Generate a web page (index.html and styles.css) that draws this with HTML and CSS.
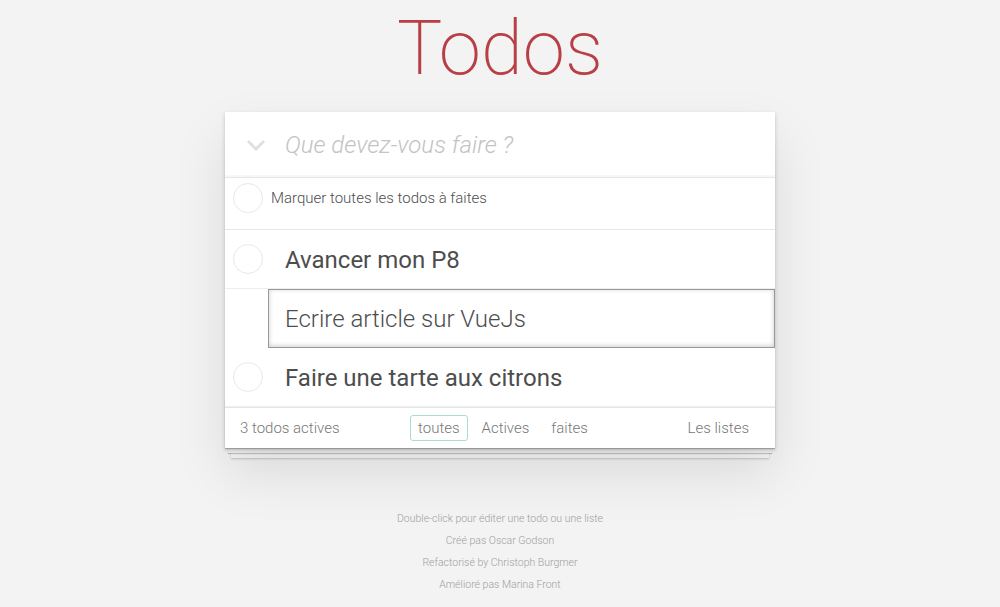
FILE: index.html
```html
<!DOCTYPE html>
<html lang="fr">
<head>
    <meta charset="UTF-8">
    <meta name="viewport" content="width=device-width, initial-scale=1.0">
    <title>Todos</title>
    <link rel="stylesheet" href="styles.css">
</head>

<body>
    <div class="page">
        <h1 class="title">Todos</h1>

        <section class="todoapp">
            <header class="header">
                <span class="toggle-all">
                    <svg width="20" height="12" viewBox="0 0 20 12">
                        <polyline points="2,2 10,10 18,2" fill="none" stroke="#e0e0e0" stroke-width="3"/>
                    </svg>
                </span>
                <input class="new-todo" type="text" placeholder="Que devez-vous faire ?">
            </header>

            <div class="mark-all">
                <span class="circle"></span>
                <span class="mark-all-label">Marquer toutes les todos à faites</span>
            </div>

            <ul class="todo-list">
                <li class="todo">
                    <span class="circle"></span>
                    <label>Avancer mon P8</label>
                </li>
                <li class="todo editing">
                    <input class="edit" type="text" value="Ecrire article sur VueJs">
                </li>
                <li class="todo">
                    <span class="circle"></span>
                    <label>Faire une tarte aux citrons</label>
                </li>
            </ul>

            <footer class="footer">
                <span class="todo-count">3 todos actives</span>
                <ul class="filters">
                    <li><a href="#" class="selected">toutes</a></li>
                    <li><a href="#">Actives</a></li>
                    <li><a href="#">faites</a></li>
                </ul>
                <a href="#" class="lists-link">Les listes</a>
            </footer>
        </section>

        <footer class="info">
            <p>Double-click pour éditer une todo ou une liste</p>
            <p>Créé pas Oscar Godson</p>
            <p>Refactorisé by Christoph Burgmer</p>
            <p>Amélioré pas Marina Front</p>
        </footer>
    </div>
</body>

</html>
```

FILE: styles.css
```css
/* General styles */
body {
    font-family: Roboto, 'Helvetica Neue', Helvetica, Arial, sans-serif;
    font-weight: 300;
    margin: 0;
    padding: 0;
    background-color: #f3f3f3;
    color: #4d4d4d;
}

.page {
    max-width: 550px;
    margin: 0 auto;
}

.title {
    font-size: 76px;
    font-weight: 200;
    line-height: 76px;
    margin: 10px 0 26px;
    color: #b83f45;
    text-align: center;
}

/* App card */
.todoapp {
    background: #fff;
    position: relative;
    box-shadow: 0 2px 4px 0 rgba(0, 0, 0, 0.2), 0 25px 50px 0 rgba(0, 0, 0, 0.1);
}

.header {
    display: flex;
    align-items: center;
    height: 65px;
    border-bottom: 1px solid #e6e6e6;
    box-shadow: inset 0 -2px 1px rgba(0, 0, 0, 0.03);
}

.toggle-all {
    width: 60px;
    display: flex;
    justify-content: center;
    padding-left: 2px;
    box-sizing: border-box;
}

.toggle-all svg {
    display: block;
}

.new-todo {
    flex: 1;
    border: none;
    outline: none;
    background: transparent;
    font-family: inherit;
    font-weight: 300;
    font-size: 24px;
    color: #4d4d4d;
    padding: 0 16px 0 0;
}

.new-todo::placeholder {
    font-style: italic;
    color: #c3c3c3;
}

/* Mark all row */
.mark-all {
    display: flex;
    align-items: center;
    height: 52px;
    box-sizing: border-box;
    padding: 0 0 12px 8px;
    border-bottom: 1px solid #e6e6e6;
}

.mark-all-label {
    font-size: 15px;
    margin-left: 8px;
    color: #4d4d4d;
}

.circle {
    width: 28px;
    height: 28px;
    border: 1px solid #e8e8e8;
    border-radius: 50%;
    flex: none;
}

/* Todo list */
.todo-list {
    list-style: none;
    margin: 0;
    padding: 0;
}

.todo {
    display: flex;
    align-items: center;
    border-bottom: 1px solid #ededed;
    font-size: 24px;
}

.todo .circle {
    margin-left: 8px;
}

.todo label {
    font-weight: 400;
    line-height: 28px;
    padding: 16px 15px 14px 22px;
    color: #4d4d4d;
}

.todo.editing {
    padding-left: 43px;
    border-bottom: none;
}

.edit {
    display: block;
    width: 100%;
    box-sizing: border-box;
    margin: 0;
    font-family: inherit;
    font-size: 24px;
    font-weight: 300;
    line-height: 33px;
    color: #4d4d4d;
    padding: 13px 16px 11px;
    border: 1px solid #999;
    outline: none;
    box-shadow: inset 0 -1px 5px 0 rgba(0, 0, 0, 0.2);
}

/* Footer of the card */
.footer {
    display: grid;
    grid-template-columns: 1fr auto 1fr;
    align-items: center;
    height: 40px;
    padding: 0 15px;
    border-top: 1px solid #e6e6e6;
    font-size: 15px;
    color: #777;
    position: relative;
}

.footer::before {
    content: '';
    position: absolute;
    right: 0;
    bottom: 0;
    left: 0;
    height: 50px;
    overflow: hidden;
    box-shadow: 0 1px 1px rgba(0, 0, 0, 0.2),
                0 8px 0 -3px #f6f6f6,
                0 9px 1px -3px rgba(0, 0, 0, 0.2),
                0 16px 0 -6px #f6f6f6,
                0 17px 2px -6px rgba(0, 0, 0, 0.2);
    z-index: -1;
}

.filters {
    display: flex;
    list-style: none;
    margin: 0 0 0 6px;
    padding: 0;
}

.filters a {
    display: block;
    margin: 3px;
    padding: 3px 7px;
    color: #777;
    text-decoration: none;
    border: 1px solid transparent;
    border-radius: 3px;
}

.filters a.selected {
    border-color: #a8dcd4;
}

.lists-link {
    justify-self: end;
    margin-right: 11px;
    color: #777;
    text-decoration: none;
}

/* Info footer */
.info {
    margin-top: 65px;
    text-align: center;
    font-size: 10.5px;
    color: #a0a0a0;
}

.info p {
    line-height: 11px;
    margin: 0 0 11px;
}
```
